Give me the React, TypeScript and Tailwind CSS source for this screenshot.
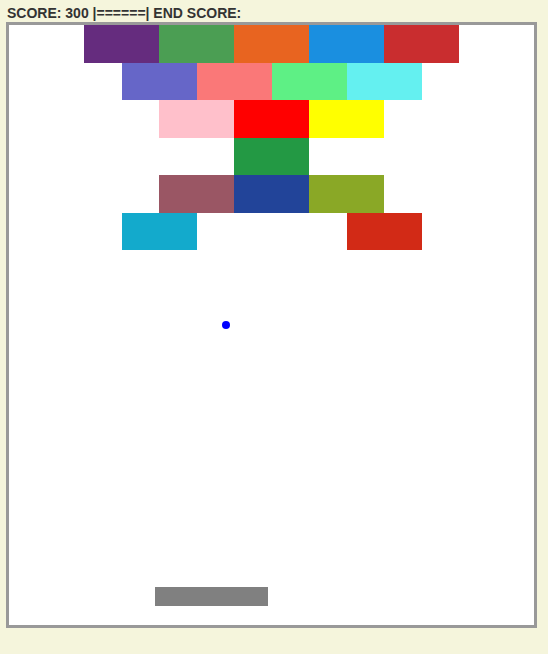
type Brick = { x: number; y: number; color: string };

const W = 75;
const H = 37.5;

const bricks: Brick[] = [
  { x: 1, y: 0, color: "#652c7e" },
  { x: 2, y: 0, color: "#4b9e53" },
  { x: 3, y: 0, color: "#e86420" },
  { x: 4, y: 0, color: "#1a8fe0" },
  { x: 5, y: 0, color: "#c92d2f" },
  { x: 1.5, y: 1, color: "#6666c8" },
  { x: 2.5, y: 1, color: "#fa7878" },
  { x: 3.5, y: 1, color: "#5ef085" },
  { x: 4.5, y: 1, color: "#64f0f0" },
  { x: 2, y: 2, color: "#ffc0cb" },
  { x: 3, y: 2, color: "#ff0000" },
  { x: 4, y: 2, color: "#ffff00" },
  { x: 3, y: 3, color: "#239944" },
  { x: 2, y: 4, color: "#9a5664" },
  { x: 3, y: 4, color: "#224499" },
  { x: 4, y: 4, color: "#8aa826" },
  { x: 1.5, y: 5, color: "#13aacc" },
  { x: 4.5, y: 5, color: "#d22a16" },
];

export default function App() {
  return (
    <div className="min-h-screen bg-[#f5f5dc] pl-[6px] pt-[5px]">
      <div className="pl-[1px] text-[14px] leading-[16px] font-bold text-[#333] font-['Liberation_Sans',Arial,sans-serif]">
        SCORE: 300 |======| END SCORE:
      </div>
      <div className="relative mt-[1px] w-[531px] h-[606px] border-[3px] border-[#999] bg-white">
        {bricks.map((b, idx) => (
          <div
            key={idx}
            className="absolute"
            style={{
              left: b.x * W,
              top: b.y * H,
              width: W,
              height: H,
              backgroundColor: b.color,
            }}
          />
        ))}
        {/* ball */}
        <div className="absolute left-[213px] top-[296px] w-[8px] h-[8px] rounded-full bg-[#0000ff]" />
        {/* paddle */}
        <div className="absolute left-[146px] top-[562px] w-[113px] h-[19px] bg-[#808080]" />
      </div>
    </div>
  );
}
